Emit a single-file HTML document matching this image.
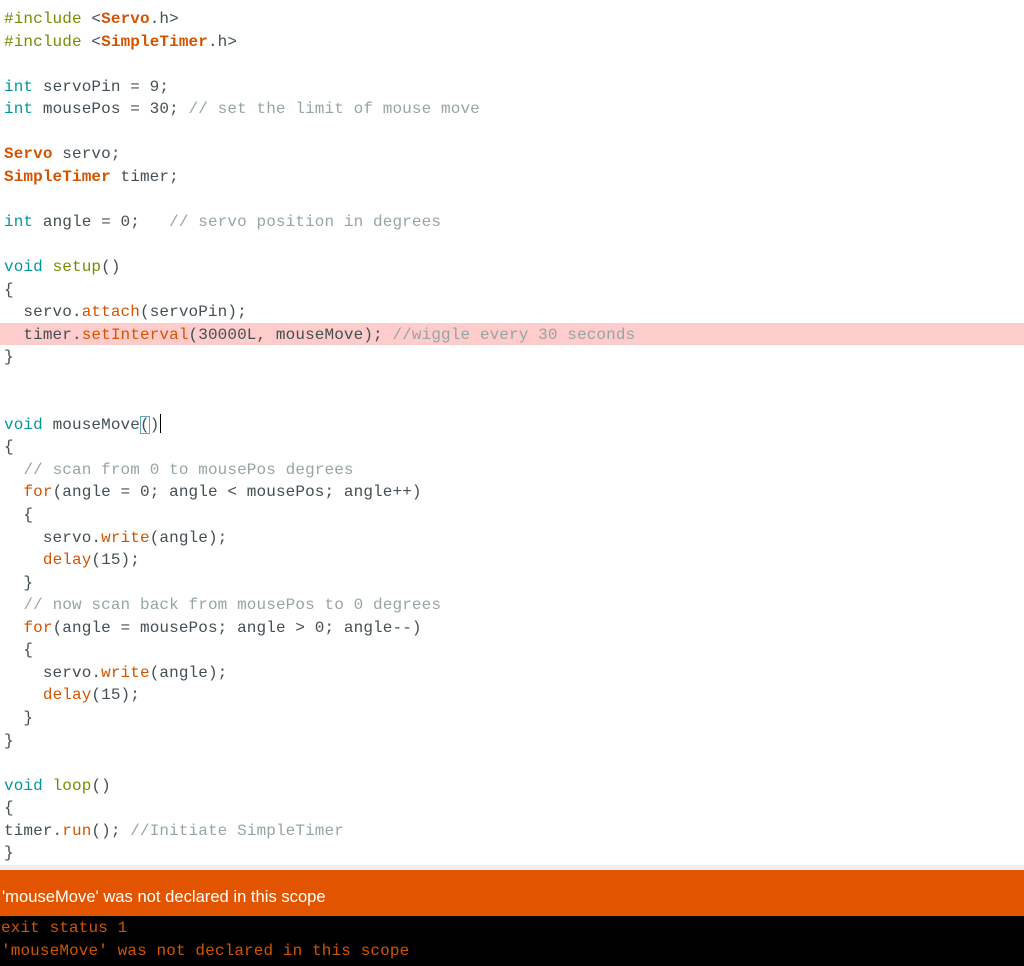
<!DOCTYPE html>
<html><head><meta charset="utf-8"><style>
html,body{margin:0;padding:0;width:1024px;height:966px;overflow:hidden;background:#fff}
pre{margin:0;position:absolute;top:8px;left:4px;font-family:"Liberation Mono",monospace;font-size:16px;letter-spacing:0.11px;line-height:22.55px;color:#434f54}
.k{color:#00979c}.o{color:#d35400}.b{color:#d35400;font-weight:bold}.c{color:#95a5a6}.i{color:#728e00}
.hl{position:absolute;left:0;top:323px;width:1024px;height:22px;background:#ffcccc}
.strip{position:absolute;left:0;top:865px;width:1024px;height:5px;background:#eceeef}
.bar{position:absolute;left:0;top:870px;width:1024px;height:46px;background:#e35400;color:#fff;font-family:"Liberation Sans",sans-serif;font-size:16.6px;line-height:54px;padding-left:2px;box-sizing:border-box}
.con{position:absolute;left:0;top:916px;width:1024px;height:50px;background:#000;color:#d35400;font-family:"Liberation Mono",monospace;font-size:16px;letter-spacing:0.12px;line-height:22.5px;padding-top:1px;padding-left:1px;box-sizing:border-box;white-space:pre}
.br{outline:1px solid #5fa8c0;outline-offset:-1px}
.cur{display:inline-block;width:1px;height:19px;background:#000;vertical-align:-4px;margin-left:1px}
</style></head><body>
<div class="hl"></div>
<pre><span class="i">#include</span> &lt;<span class="b">Servo</span>.h&gt;
<span class="i">#include</span> &lt;<span class="b">SimpleTimer</span>.h&gt;

<span class="k">int</span> servoPin = 9;
<span class="k">int</span> mousePos = 30; <span class="c">// set the limit of mouse move</span>

<span class="b">Servo</span> servo;
<span class="b">SimpleTimer</span> timer;

<span class="k">int</span> angle = 0;   <span class="c">// servo position in degrees</span>

<span class="k">void</span> <span class="i">setup</span>()
{
  servo.<span class="o">attach</span>(servoPin);
  timer.<span class="o">setInterval</span>(30000L, mouseMove); <span class="c">//wiggle every 30 seconds</span>
}


<span class="k">void</span> mouseMove<span class="br">(</span>)<span class="cur"></span>
{
  <span class="c">// scan from 0 to mousePos degrees</span>
  <span class="o">for</span>(angle = 0; angle &lt; mousePos; angle++)
  {
    servo.<span class="o">write</span>(angle);
    <span class="o">delay</span>(15);
  }
  <span class="c">// now scan back from mousePos to 0 degrees</span>
  <span class="o">for</span>(angle = mousePos; angle &gt; 0; angle--)
  {
    servo.<span class="o">write</span>(angle);
    <span class="o">delay</span>(15);
  }
}

<span class="k">void</span> <span class="i">loop</span>()
{
timer.<span class="o">run</span>(); <span class="c">//Initiate SimpleTimer</span>
}</pre>
<div class="strip"></div>
<div class="bar">'mouseMove' was not declared in this scope</div>
<div class="con">exit status 1
'mouseMove' was not declared in this scope</div>
</body></html>
